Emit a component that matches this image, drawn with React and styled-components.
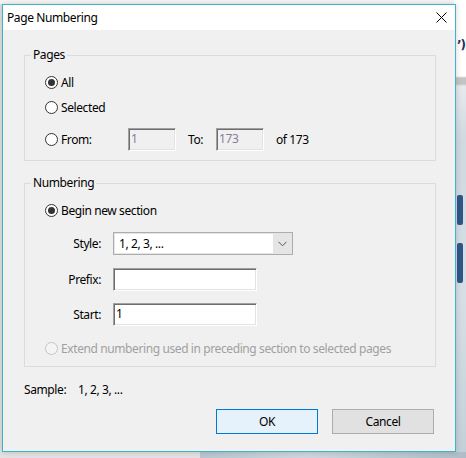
import React from "react";
import styled, { createGlobalStyle } from "styled-components";

const Global = createGlobalStyle`
  html, body { margin: 0; padding: 0; }
  body {
    background: #e4e4e4;
    font-family: "Noto Sans", "Open Sans", Arial, sans-serif;
    font-size: 12px;
    letter-spacing: -0.4px;
    color: #000;
  }
  * { box-sizing: border-box; }
`;

const Screen = styled.div`
  position: relative;
  width: 466px;
  height: 458px;
  overflow: hidden;
  background: linear-gradient(180deg, #f7f7f7 0px, #f7f7f7 4px, #e2e2e2 4px);
  padding: 4px 0 0 2px;
`;

const Backdrop = styled.div`
  position: absolute;
  right: 0;
  top: 0;
  width: 12px;
  height: 458px;
  background: linear-gradient(180deg, #ffffff 0px, #ffffff 76px, #c4c4c4 78px, #c4c4c4 84px, #e6eaee 86px, #cfd9e0 140px, #d6dfe5 300px, #c3cfd8 458px);
`;

const BackText = styled.span`
  position: absolute;
  left: 3px;
  top: 38px;
  font-family: "DejaVu Sans", sans-serif;
  font-weight: bold;
  font-size: 12px;
  letter-spacing: -1px;
  color: #1f2f5a;
`;

const BackBar = styled.div`
  position: absolute;
  left: 3px;
  width: 6px;
  border-radius: 2px;
  background: #2e5788;
  top: ${(p) => p.$top}px;
  height: ${(p) => p.$h}px;
`;

const BottomImage = styled.div`
  position: absolute;
  left: 200px;
  bottom: 0;
  width: 266px;
  height: 6px;
  background: linear-gradient(90deg, #b9c6d0, #cdd7de 40%, #aebdc8);
`;

const Dialog = styled.div`
  position: relative;
  width: 454px;
  height: 448px;
  border: 1px solid #3fb2cb;
  display: flex;
  flex-direction: column;
  background: #f0f0f0;
  box-shadow: 0 0 6px rgba(0, 0, 0, 0.18);
`;

const TitleBar = styled.div`
  height: 25px;
  background: #ffffff;
  display: flex;
  align-items: center;
  justify-content: space-between;
  padding-left: 4px;
`;

const Title = styled.span`
  font-size: 12px;
  color: #000;
`;

const CloseButton = styled.div`
  width: 28px;
  height: 25px;
  display: flex;
  align-items: center;
  justify-content: center;
`;

const Body = styled.div`
  flex: 1;
  display: flex;
  flex-direction: column;
  padding: 25px 19px 0 21px;
`;

const GroupBox = styled.div`
  position: relative;
  border: 1px solid #dcdcdc;
  height: ${(p) => p.$h}px;
  margin-top: ${(p) => p.$mt || 0}px;
  padding: 16px 0 0 20px;
  display: flex;
  flex-direction: column;
`;

const Legend = styled.span`
  position: absolute;
  top: -9px;
  left: 6px;
  padding: 0 2px;
  line-height: 16px;
  background: #f0f0f0;
`;

const RadioRow = styled.div`
  display: flex;
  align-items: center;
  height: ${(p) => p.$h || 20}px;
  margin-top: ${(p) => p.$mt || 0}px;
  color: ${(p) => (p.$disabled ? "#a0a0a0" : "#000")};
`;

const RadioLabel = styled.div`
  display: flex;
  align-items: center;
  gap: 3px;
  width: ${(p) => (p.$w ? `${p.$w}px` : "auto")};
`;

const Circle = styled.span`
  width: 13px;
  height: 13px;
  border-radius: 50%;
  border: 1px solid ${(p) => (p.$disabled ? "#c4c4c4" : "#333333")};
  background: ${(p) => (p.$disabled ? "#f4f4f4" : "#ffffff")};
  display: flex;
  align-items: center;
  justify-content: center;
  flex: none;
  &::after {
    content: "";
    width: 7px;
    height: 7px;
    border-radius: 50%;
    background: #333333;
    display: ${(p) => (p.$checked ? "block" : "none")};
  }
`;

const SunkenInput = styled.div`
  width: ${(p) => p.$w}px;
  height: 23px;
  border-top: 1px solid #a0a0a0;
  border-left: 1px solid #a0a0a0;
  border-right: 1px solid #ffffff;
  border-bottom: 1px solid #ffffff;
  box-shadow: inset 1px 1px 0 #6e6e6e, inset -1px -1px 0 #e3e3e3;
  background: ${(p) => (p.$disabled ? "#f0f0f0" : "#ffffff")};
  color: ${(p) => (p.$disabled ? "#8c7a98" : "#000")};
  padding: 2px 0 0 2px;
  line-height: 16px;
`;

const InlineText = styled.span`
  margin-left: ${(p) => p.$ml || 0}px;
  width: ${(p) => (p.$w ? `${p.$w}px` : "auto")};
`;

const FieldRow = styled.div`
  display: flex;
  align-items: center;
  gap: 12px;
  margin-top: ${(p) => p.$mt || 0}px;
`;

const FieldLabel = styled.span`
  width: 56px;
  text-align: right;
`;

const Select = styled.div`
  width: 180px;
  height: 23px;
  border: 1px solid #adadad;
  background: #e5e5e5;
  display: flex;
  padding: 1px 0 1px 1px;
`;

const SelectValue = styled.div`
  flex: 1;
  background: #ffffff;
  padding-left: 4px;
  line-height: 19px;
`;

const SelectArrow = styled.div`
  width: 19px;
  display: flex;
  align-items: center;
  justify-content: center;
`;

const SampleRow = styled.div`
  display: flex;
  align-items: center;
  height: 16px;
  margin-top: 14px;
`;

const SampleLabel = styled.span`
  width: 54px;
`;

const ButtonRow = styled.div`
  display: flex;
  justify-content: flex-end;
  gap: 14px;
  margin-top: 12px;
  padding-right: 2px;
`;

const Button = styled.div`
  width: 102px;
  height: 25px;
  display: flex;
  align-items: center;
  justify-content: center;
  border: 1px solid ${(p) => (p.$primary ? "#0078d7" : "#adadad")};
  background: ${(p) => (p.$primary ? "#e5f1fb" : "#e1e1e1")};
`;

function Radio({ checked, disabled }) {
  return <Circle $checked={checked} $disabled={disabled} />;
}

export default function App() {
  return (
    <>
      <Global />
      <Screen>
        <Backdrop>
          <BackText>’)</BackText>
          <BackBar $top={195} $h={30} />
          <BackBar $top={243} $h={40} />
        </Backdrop>
        <BottomImage />
        <Dialog>
          <TitleBar>
            <Title>Page Numbering</Title>
            <CloseButton>
              <svg width="11" height="11" viewBox="0 0 11 11">
                <path d="M0.5 0.5 L10.5 10.5 M10.5 0.5 L0.5 10.5" stroke="#000" strokeWidth="1" fill="none" />
              </svg>
            </CloseButton>
          </TitleBar>
          <Body>
            <GroupBox $h={106}>
              <Legend>Pages</Legend>
              <RadioRow>
                <RadioLabel>
                  <Radio checked />
                  <span>All</span>
                </RadioLabel>
              </RadioRow>
              <RadioRow $mt={5}>
                <RadioLabel>
                  <Radio />
                  <span>Selected</span>
                </RadioLabel>
              </RadioRow>
              <RadioRow $mt={11} $h={23}>
                <RadioLabel $w={83}>
                  <Radio />
                  <span>From:</span>
                </RadioLabel>
                <SunkenInput $w={48} $disabled>1</SunkenInput>
                <InlineText $ml={12} $w={28}>To:</InlineText>
                <SunkenInput $w={48} $disabled>173</SunkenInput>
                <InlineText $ml={12}>of 173</InlineText>
              </RadioRow>
            </GroupBox>

            <GroupBox $h={184} $mt={22}>
              <Legend>Numbering</Legend>
              <RadioRow>
                <RadioLabel>
                  <Radio checked />
                  <span>Begin new section</span>
                </RadioLabel>
              </RadioRow>
              <FieldRow $mt={12}>
                <FieldLabel>Style:</FieldLabel>
                <Select>
                  <SelectValue>1, 2, 3, ...</SelectValue>
                  <SelectArrow>
                    <svg width="9" height="6" viewBox="0 0 9 6">
                      <path d="M0.5 0.8 L4.5 4.8 L8.5 0.8" stroke="#555" strokeWidth="1" fill="none" />
                    </svg>
                  </SelectArrow>
                </Select>
              </FieldRow>
              <FieldRow $mt={13}>
                <FieldLabel>Prefix:</FieldLabel>
                <SunkenInput $w={144} />
              </FieldRow>
              <FieldRow $mt={12}>
                <FieldLabel>Start:</FieldLabel>
                <SunkenInput $w={144}>1</SunkenInput>
              </FieldRow>
              <RadioRow $mt={12} $disabled>
                <RadioLabel>
                  <Radio disabled />
                  <span>Extend numbering used in preceding section to selected pages</span>
                </RadioLabel>
              </RadioRow>
            </GroupBox>

            <SampleRow>
              <SampleLabel>Sample:</SampleLabel>
              <span>1, 2, 3, ...</span>
            </SampleRow>

            <ButtonRow>
              <Button $primary>OK</Button>
              <Button>Cancel</Button>
            </ButtonRow>
          </Body>
        </Dialog>
      </Screen>
    </>
  );
}
